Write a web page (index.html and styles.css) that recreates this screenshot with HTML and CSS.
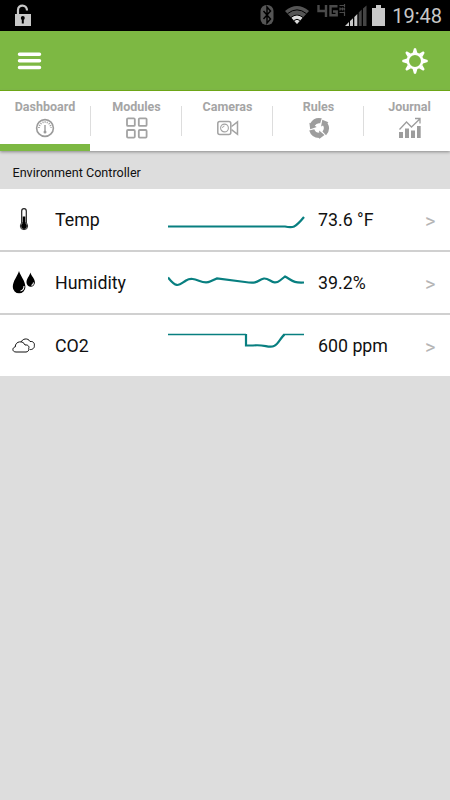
FILE: index.html
```html
<!DOCTYPE html>
<html lang="en">
<head>
<meta charset="utf-8">
<meta name="viewport" content="width=device-width">
<title>Environment Controller</title>
<link rel="stylesheet" href="styles.css">
</head>
<body>
<div class="status">
  <svg class="lock" width="18" height="24" viewBox="0 0 18 24"><path d="M4 12V7C4 1 13 1 13 7.500" fill="none" stroke="#c8c8c8" stroke-width="2.200"/><path fill="#c8c8c8" d="M1 11h16v12H1z"/><circle cx="8.800" cy="15" r="2"/><path d="M7.800 15h2v5.500h-2z"/></svg>
  <svg class="signals" width="130" height="24" viewBox="0 0 130 24">
    <rect x=".5" y="2" width="13" height="20" rx="6" fill="#555"/>
    <path d="M3.500 8l7 8-3.500 4V4l3.500 4-7 8" fill="none" stroke="#000" stroke-width="1.500"/>
    <path d="M25 8Q37-2 49 8L37 21z" fill="#555"/>
    <path d="M31.300 14.400Q37 9 42.700 14.400L37 21z" fill="#ddd"/>
    <path d="M27.500 10.700Q37 3 46.500 10.700M31 14.500Q37 9.500 43 14.500M34 17.500Q37 15 40 17.500" fill="none" stroke="#000" stroke-width="1"/>
    <path d="M58.500 2v6h8M66 2v12M77.500 3.200h-7v9h6.200V8.500H73" fill="none" stroke="#4a4a4a" stroke-width="2.400"/>
    <path d="M79.500 2.500h5.500M84.500 1v3M79.500 5.800h5.500M80 4.500v3M82.500 4.500v3M84.500 4.500v3M79.500 9.500h5.500M84.500 8.500v4.500" fill="none" stroke="#4a4a4a" stroke-width="1.200"/>
    <path fill="#c8c8c8" d="M85 23l4-4v4zM90 18l3-2.800V23h-3zM94.300 14l3-3V23h-3z"/>
    <path fill="#444" d="M98.700 9.500l3-3V23h-3zM103 5.500l3.500-3V23H103z"/>
    <path fill="#c8c8c8" d="M116 2h5v3h4v18h-13V5h4z"/>
  </svg>
  <span class="clock">19:48</span>
</div>
<header class="bar">
  <svg width="26" height="20" viewBox="0 0 26 20"><path d="M2.500 3.200h20M2.500 9.800h20M2.500 16.400h20" stroke="#fff" stroke-width="3.500" stroke-linecap="round"/></svg>
  <svg width="26" height="26" viewBox="-13 -13 26 26" fill="#fff"><g id="teeth"><path id="pair" d="M-2.400-8L-1-12.700H1L2.400-8M-2.400 8L-1 12.700H1L2.400 8"/><use href="#pair" transform="rotate(45)"/></g><use href="#teeth" transform="rotate(90)"/><circle r="7.200" fill="#7db843" stroke="#fff" stroke-width="2.500"/></svg>
</header>
<nav class="tabs">
  <div class="tab active"><span>Dashboard</span>
    <svg width="22" height="22" viewBox="0 0 22 22" fill="none" stroke="#9b9b9b"><circle cx="11" cy="11" r="8.400" stroke-width="1.600"/><path d="M5 11a6 6 0 0 1 12 0" stroke-dasharray="1 1.200" stroke-width="1.800"/><path d="M11 8v8" stroke-width="1.400"/><circle cx="11" cy="15" r="1.500" fill="#9b9b9b" stroke="none"/></svg></div>
  <div class="tab"><span>Modules</span>
    <svg width="22" height="22" viewBox="0 0 22 22" fill="none" stroke="#a3a3a3" stroke-width="1.800"><rect x="1" y="1.300" width="7.800" height="7.600" rx="1"/><rect x="12.800" y="1.300" width="7.800" height="7.600" rx="1"/><rect x="1" y="13" width="7.800" height="7.600" rx="1"/><rect x="12.800" y="13" width="7.800" height="7.600" rx="1"/></svg></div>
  <div class="tab"><span>Cameras</span>
    <svg width="22" height="22" viewBox="0 0 22 22" fill="none" stroke="#a3a3a3" stroke-width="1.500"><rect x=".8" y="4.600" width="13" height="12.800" rx="2"/><circle cx="7.500" cy="11" r="3.900" stroke-width="1.100"/><path d="M5.500 11a2 2 0 0 1 2-2" stroke-width=".9"/><path d="M14.500 9.500l6-4.700v12.500l-6-4.700"/></svg></div>
  <div class="tab"><span>Rules</span>
    <svg width="22" height="22" viewBox="-11 -11 22 22" fill="#9d9d9d"><path id="arrow" d="M-9.800 2.500L-4.700 1.300Q-3.500 4.800.2 4.800V2.500L5.500 7 .2 11V9.900Q-7.500 9.900-9.800 2.500z"/><use href="#arrow" transform="rotate(120)"/><use href="#arrow" transform="rotate(240)"/></svg></div>
  <div class="tab"><span>Journal</span>
    <svg width="22" height="22" viewBox="0 0 22 22" fill="#9d9d9d"><path d="M0 15h4v6H0zM6 11.500h4V21H6zM12 13.500h4V21h-4zM18 9h3.700v12H18z"/><path d="M.5 12.500l7-7.500 5 5 8-7.700M16 1.500h5v5" fill="none" stroke="#9d9d9d" stroke-width="1.300"/></svg></div>
</nav>
<h1 class="section">Environment Controller</h1>
<main>
  <div class="row">
    <svg class="icon" width="24" height="26" viewBox="0 0 24 26"><path d="M9.700 17V4a2.300 2.300 0 0 1 4.600 0V17" fill="#fff" stroke="#222" stroke-width="1.200"/><circle cx="12" cy="19" r="3.700" stroke="#333" fill="#fff"/><circle cx="12" cy="19" r="2.900"/><path d="M10.700 9.500h2.600v9h-2.600z"/></svg>
    <span class="name">Temp</span>
    <svg class="chart" width="138" height="61" viewBox="0 0 138 61"><path d="M0 37.500H117C125 39 127 39 136 28"/></svg>
    <span class="value">73.6 °F</span><span class="more">&gt;</span>
  </div>
  <div class="row">
    <svg class="icon" width="24" height="26" viewBox="0 0 24 26"><path d="M7 1C5.500 6 .8 11 .8 17a6.300 6.300 0 0 0 12.600 0C13.400 11 8.500 6 7 1z"/><path d="M18.400 2.500c-.8 3.500-3.900 6-3.900 10a4.200 4.200 0 0 0 8.400 0c0-4-3.700-6.500-4.500-10z"/><path d="M12 16c0 3-1.500 4.500-3.500 5M21.500 12.500c0 1.800-1 2.500-2 3" fill="none" stroke="#fff" stroke-width="1.100"/></svg>
    <span class="name">Humidity</span>
    <svg class="chart" width="138" height="61" viewBox="0 0 138 61"><path d="M0 25.500C9 37 11 33 18 28.500 27 23 34 34 42 29.500L49 26.500 77 30C92 32 89 28 96 26.500 102 26 105 34 112 28.500L117 24.500C125 29 125 31 136 30.500"/></svg>
    <span class="value">39.2%</span><span class="more">&gt;</span>
  </div>
  <div class="row">
    <svg class="icon" width="24" height="26" viewBox="0 0 24 26" fill="#fff" stroke="#111" stroke-width="1"><path d="M9 9.500c1-4 7-5 9-1 3.500-.5 4.800 2 4.300 4.300.5 2-2 4.200-4.500 3.700"/><path d="M4 19c-4 0-4-4.500-.8-5 .1-6.500 8.300-6.500 9.800-2 3.500-.5 4.500 2 3.700 3.300.8 2-1 3.700-2.700 3.700z"/></svg>
    <span class="name">CO2</span>
    <svg class="chart" width="138" height="61" viewBox="0 0 138 61"><path d="M0 19.500H78M116 19.500H136" class="thin"/><path d="M78 19V30.500H85C96 29 101 33.500 106 31 110 30 113 22 116.500 19.500"/></svg>
    <span class="value">600 ppm</span><span class="more">&gt;</span>
  </div>
</main>
</body>
</html>
```
FILE: styles.css
```css
* { box-sizing: border-box; }
body { margin: 0; height: 800px; overflow: hidden; background: #ddd; color: #111; font-family: Roboto, sans-serif; }
svg { display: block; flex: none; }
.status { height: 31px; background: #000; display: flex; padding: 3px 8px 0 14px; }
.signals { margin-left: auto; }
.clock { width: 54px; margin-left: -2px; color: #c8c8c8; font-size: 20px; line-height: 26px; text-align: right; white-space: nowrap; }
.bar { height: 60px; background: #7db843; border-bottom: 1px solid #68ad00; display: flex; align-items: center; justify-content: space-between; padding: 1px 22px 0 17px; }
.tabs { height: 60px; background: #fff; display: grid; grid-template-columns: repeat(5, 91px); box-shadow: 0 1px 3px #888; position: relative; }
.tab { display: flex; flex-direction: column; align-items: center; padding-top: 9px; color: #a5a5a5; font-size: 12.5px; line-height: 14px; font-weight: 700; background: linear-gradient(#ddd, #ddd) right 15px / 1px 30px no-repeat; }
.tab svg { margin-top: 3px; }
.tab.active { background: linear-gradient(#ddd, #ddd) right 15px / 1px 30px no-repeat, linear-gradient(#7db843, #7db843) 0 100% / 90px 7px no-repeat; padding-right: 1px; }
.section { margin: 0; height: 38px; padding: 2px 0 0 12.5px; font-size: 12.6px; line-height: 40px; font-weight: 400; }
.row { height: 63px; background: #fff; border-bottom: 2px solid #d0d0d0; display: grid; grid-template-columns: 43px 113px 150px 107px 1fr; align-items: center; padding-left: 12px; font-size: 17.8px; }
.row:last-child { height: 61px; border: 0; }
.chart { align-self: start; fill: none; stroke: #087f80; stroke-width: 2.2; }
.chart .thin { stroke-width: 1.6; }
.name, .value { white-space: nowrap; }
.more { color: #b5b5b5; font-size: 20px; padding-top: 2px; }
```
